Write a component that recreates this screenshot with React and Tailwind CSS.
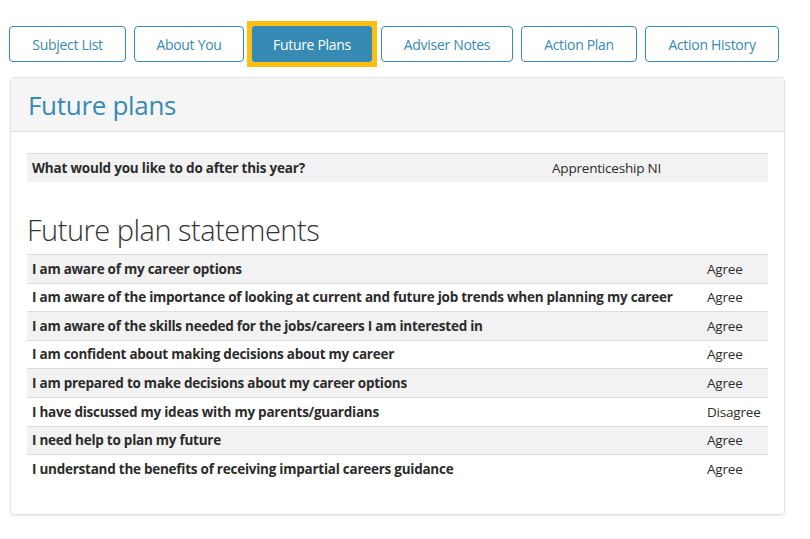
import React from 'react';

const tabs = ['Subject List', 'About You', 'Future Plans', 'Adviser Notes', 'Action Plan', 'Action History'];

const statements = [
  ['I am aware of my career options', 'Agree'],
  ['I am aware of the importance of looking at current and future job trends when planning my career', 'Agree'],
  ['I am aware of the skills needed for the jobs/careers I am interested in', 'Agree'],
  ['I am confident about making decisions about my career', 'Agree'],
  ['I am prepared to make decisions about my career options', 'Agree'],
  ['I have discussed my ideas with my parents/guardians', 'Disagree'],
  ['I need help to plan my future', 'Agree'],
  ['I understand the benefits of receiving impartial careers guidance', 'Agree'],
];

const App = () => {
  const active = 'Future Plans';

  return (
    <div className="min-h-[539px] bg-white text-[#2b2b2b] font-['Open_Sans','Noto_Sans',sans-serif] text-[14px]">
      {/* Tabs */}
      <div className="flex items-center gap-2 px-[9px] pt-[26px]">
        {tabs.map((tab) =>
          tab === active ? (
            <div key={tab} className="outline-[5px] outline-solid outline-[#fdc010]">
              <button className="h-9 w-[120px] rounded-[2px] bg-[#378ab3] text-white text-[14px] tracking-[-0.3px]">
                {tab}
              </button>
            </div>
          ) : (
            <button
              key={tab}
              className={`h-9 rounded-[4px] border border-[#378ab3] bg-white text-[#378ab3] text-[14px] tracking-[-0.3px] ${
                tab === 'Subject List' ? 'w-[117px]' :
                tab === 'About You' ? 'w-[110px]' :
                tab === 'Adviser Notes' ? 'w-[132px] ml-px' :
                tab === 'Action Plan' ? 'w-[116px]' : 'w-[134px]'
              }`}
            >
              {tab}
            </button>
          )
        )}
      </div>

      {/* Panel */}
      <div className="mx-[10px] mt-[15px] w-[775px] rounded-[4px] border border-[#e3e3e3] shadow-[0_1px_2px_rgba(0,0,0,0.08)]">
        <div className="h-[54px] border-b border-[#dcdcdc] bg-[#f5f5f5] px-[17px] flex items-center rounded-t-[4px]">
          <h1 className="text-[26px] text-[#378ab3] font-normal tracking-[-0.3px] leading-none">Future plans</h1>
        </div>

        <div className="px-[16px] pt-[21px] pb-[30px]">
          <div className="flex h-[29px] items-center border-t border-[#dddddd] bg-[#f2f2f2] w-[741px]">
            <div className="w-[520px] pl-[5px] font-bold text-[13.5px] tracking-[-0.2px]">What would you like to do after this year?</div>
            <div className="pl-[5px] text-[13.5px] tracking-[-0.2px]">Apprenticeship NI</div>
          </div>

          <h2 className="mt-[30px] mb-[6px] text-[29px] font-light leading-[36px] tracking-[-0.5px] text-[#333]">
            Future plan statements
          </h2>

          <div className="w-[741px] border-b border-transparent">
            {statements.map(([text, value], i) => (
              <div
                key={text}
                className={`flex h-[28.6px] items-center border-t border-[#dddddd] ${i % 2 === 0 ? 'bg-[#f2f2f2]' : 'bg-white'}`}
              >
                <div className="w-[675px] pl-[5px] font-bold text-[13.5px] tracking-[-0.25px] whitespace-nowrap">{text}</div>
                <div className="pl-[5px] text-[13.5px] tracking-[-0.2px]">{value}</div>
              </div>
            ))}
          </div>
        </div>
      </div>
    </div>
  );
};

export default App;
